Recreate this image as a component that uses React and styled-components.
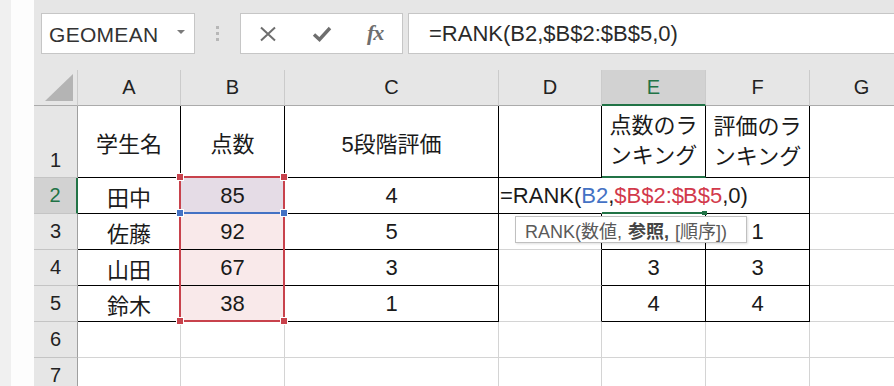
import React from "react";
import styled, { createGlobalStyle } from "styled-components";

const GREEN = "#217346";
const RED = "#c8424c";
const BLUE = "#4472c4";

const LINE = {
  black: "#000000",
  grid: "#d4d4d4",
  none: "transparent",
  green: GREEN,
};

const COLS = ["A", "B", "C", "D", "E", "F", "G"];

// E3 sits under the function tooltip, so it is left empty here
const ROWS = [
  ["学生名", "点数", "5段階評価", "", "点数のランキング", "評価のランキング", ""],
  ["田中", "85", "4", "edit", "", "", ""],
  ["佐藤", "92", "5", "", "", "1", ""],
  ["山田", "67", "3", "", "3", "3", ""],
  ["鈴木", "38", "1", "", "4", "4", ""],
  ["", "", "", "", "", "", ""],
  ["", "", "", "", "", "", ""],
];

// which border each cell draws on its right and bottom edge
function edges(r, c) {
  let right = "grid";
  let bottom = "grid";
  const table1 = r <= 5 && c <= 2;
  const table2 = r <= 5 && (c === 4 || c === 5);
  if (table1 || table2) {
    right = "black";
    bottom = "black";
  }
  if (r <= 5 && c === 3) right = "black";
  if (c === 3 && r <= 2) bottom = "black";
  if (r === 2 && (c === 3 || c === 4)) right = "none";
  if (c === 4 && r <= 2) bottom = "green";
  return { right, bottom };
}

function cellBg(r, c) {
  if (c !== 1 || r < 2 || r > 5) return "#ffffff";
  return r === 2 ? "#e5dce6" : "#f9e9ea";
}

export default function App() {
  return (
    <>
      <GlobalStyle />
      <Window>
        <SideStrip />
        <Sheet>
          <FormulaBar>
            <NameBox>
              GEOMEAN
              <DropArrow />
            </NameBox>
            <Grip>
              <Dot />
              <Dot />
              <Dot />
            </Grip>
            <FxBox>
              <FxSlot>
                <svg width="20" height="16" viewBox="0 0 20 16">
                  <path d="M3 1.5 L17 14.5 M17 1.5 L3 14.5" stroke="#6e6e6e" strokeWidth="2" fill="none" />
                </svg>
              </FxSlot>
              <FxSlot>
                <svg width="20" height="16" viewBox="0 0 20 16">
                  <path d="M2 8.5 L7.5 13.5 L18 2" stroke="#6e6e6e" strokeWidth="3.4" fill="none" />
                </svg>
              </FxSlot>
              <FxSlot>
                <FxText>fx</FxText>
              </FxSlot>
            </FxBox>
            <FormulaInput>=RANK(B2,$B$2:$B$5,0)</FormulaInput>
          </FormulaBar>

          <Grid>
            <Corner>
              <svg width="28" height="27" viewBox="0 0 28 27">
                <polygon points="0,27 28,0 28,27" fill="#b4b4b4" />
              </svg>
            </Corner>
            {COLS.map((l) => (
              <ColHead key={l} $active={l === "E"}>
                {l}
              </ColHead>
            ))}

            {ROWS.map((row, i) => {
              const r = i + 1;
              return (
                <React.Fragment key={r}>
                  <RowHead $active={r === 2} $bottom={r === 1}>
                    {r}
                  </RowHead>
                  {row.map((text, c) => {
                    const e = edges(r, c);
                    if (text === "edit") {
                      return (
                        <EditCell key={c} $r={e.right} $b={e.bottom}>
                          =RANK(<Ref $color={BLUE}>B2</Ref>,
                          <Ref $color="#d2394b">$B$2:$</Ref>
                          <Caret />
                          <Ref $color="#d2394b">B$5</Ref>,0)
                        </EditCell>
                      );
                    }
                    return (
                      <Cell
                        key={c}
                        $r={e.right}
                        $b={e.bottom}
                        $bg={cellBg(r, c)}
                        $wrap={r === 1 && (c === 4 || c === 5)}
                      >
                        {text}
                      </Cell>
                    );
                  })}
                </React.Fragment>
              );
            })}

            <RangeBox />
            <RefLine />
            <Handle $x={146} $y={107} $c={RED} />
            <Handle $x={250} $y={107} $c={RED} />
            <Handle $x={146} $y={251} $c={RED} />
            <Handle $x={250} $y={251} $c={RED} />
            <Handle $x={146} $y={143} $c={BLUE} />
            <Handle $x={250} $y={143} $c={BLUE} />
            <FillHandle />

            <Tip>
              <span>RANK(数値,</span>
              <b>参照,</b>
              <span>[順序])</span>
            </Tip>
          </Grid>
        </Sheet>
      </Window>
    </>
  );
}

const GlobalStyle = createGlobalStyle`
  html, body {
    margin: 0;
    padding: 0;
    background: #ffffff;
  }
  body {
    font-family: "Liberation Sans", "Noto Sans CJK JP", sans-serif;
    overflow: hidden;
  }
`;

const Window = styled.div`
  display: flex;
  width: 894px;
  height: 386px;
  overflow: hidden;
`;

const SideStrip = styled.div`
  width: 23px;
  flex-shrink: 0;
  border-left: 11px solid #f0f0f0;
  background: #fdfdfd;
`;

const Sheet = styled.div`
  flex: 1;
  min-width: 0;
  overflow: hidden;
  background: #e6e6e6;
`;

const FormulaBar = styled.div`
  display: flex;
  align-items: stretch;
  height: 41px;
  padding: 13px 0 16px 7px;
`;

const Box = styled.div`
  box-sizing: border-box;
  background: #ffffff;
  border: 1px solid #c6c6c6;
  display: flex;
  align-items: center;
`;

const NameBox = styled(Box)`
  width: 154px;
  flex-shrink: 0;
  padding: 2px 9px 0 7px;
  justify-content: space-between;
  font-size: 21px;
  color: #333333;
  letter-spacing: 0.3px;
`;

const DropArrow = styled.span`
  width: 0;
  height: 0;
  border-left: 4px solid transparent;
  border-right: 4px solid transparent;
  border-top: 4px solid #7a7a7a;
  margin-top: -6px;
`;

const Grip = styled.div`
  width: 45px;
  flex-shrink: 0;
  display: flex;
  flex-direction: column;
  align-items: center;
  justify-content: center;
  gap: 3px;
`;

const Dot = styled.span`
  width: 3px;
  height: 3px;
  background: #b7b7b7;
`;

const FxBox = styled(Box)`
  width: 163px;
  flex-shrink: 0;
`;

const FxSlot = styled.div`
  width: 54px;
  display: flex;
  justify-content: center;
  align-items: center;
`;

const FxText = styled.span`
  font-family: "Liberation Serif", "DejaVu Serif", serif;
  font-style: italic;
  font-weight: bold;
  font-size: 22px;
  color: #6e6e6e;
  letter-spacing: -1px;
  margin-top: -2px;
`;

const FormulaInput = styled(Box)`
  flex: 1;
  margin-left: 5px;
  border-right: none;
  padding-left: 20px;
  font-size: 22px;
  color: #2a2a2a;
  white-space: nowrap;
`;

const Grid = styled.div`
  position: relative;
  display: grid;
  grid-template-columns: 44px 103px 104px 214px 103px 104px 104px 104px;
  grid-template-rows: 36px 72px repeat(6, 36px);
`;

const Corner = styled.div`
  box-sizing: border-box;
  display: flex;
  align-items: flex-end;
  justify-content: flex-end;
  padding: 0 4px 4px 0;
  border-right: 1px solid #cbcbcb;
  border-bottom: 1px solid #ababab;
`;

const ColHead = styled.div`
  box-sizing: border-box;
  display: flex;
  align-items: center;
  justify-content: center;
  font-size: 20px;
  color: ${(p) => (p.$active ? GREEN : "#222222")};
  background: ${(p) => (p.$active ? "#d2d2d2" : "#e6e6e6")};
  border-right: 1px solid #cbcbcb;
  border-bottom: ${(p) => (p.$active ? `2px solid ${GREEN}` : "1px solid #ababab")};
`;

const RowHead = styled.div`
  box-sizing: border-box;
  display: flex;
  align-items: ${(p) => (p.$bottom ? "flex-end" : "center")};
  justify-content: center;
  padding-bottom: ${(p) => (p.$bottom ? "5px" : "0")};
  font-size: 20px;
  color: ${(p) => (p.$active ? GREEN : "#222222")};
  background: ${(p) => (p.$active ? "#d2d2d2" : "#e6e6e6")};
  border-right: ${(p) => (p.$active ? `2px solid ${GREEN}` : "1px solid #9f9f9f")};
  border-bottom: 1px solid #c4c4c4;
`;

const Cell = styled.div`
  box-sizing: border-box;
  display: flex;
  align-items: center;
  justify-content: center;
  text-align: center;
  font-size: 22px;
  line-height: ${(p) => (p.$wrap ? "30px" : "normal")};
  white-space: ${(p) => (p.$wrap ? "normal" : "nowrap")};
  color: #1a1a1a;
  background: ${(p) => p.$bg};
  border-right: 1px solid ${(p) => LINE[p.$r]};
  border-bottom: ${(p) => (p.$b === "green" ? "2px" : "1px")} solid ${(p) => LINE[p.$b]};
`;

const EditCell = styled(Cell)`
  position: relative;
  z-index: 2;
  justify-content: flex-start;
  background: #ffffff;
  padding-left: 1px;
  overflow: visible;
`;

const Ref = styled.span`
  color: ${(p) => p.$color};
`;

const Caret = styled.span`
  display: inline-block;
  width: 1px;
  height: 35px;
  margin-right: -1px;
  background: #a8a8a8;
  align-self: stretch;
`;

const RangeBox = styled.div`
  position: absolute;
  left: 145px;
  top: 106px;
  width: 106px;
  height: 146px;
  box-sizing: border-box;
  border: 2px solid ${RED};
  pointer-events: none;
`;

const RefLine = styled.div`
  position: absolute;
  left: 145px;
  top: 142px;
  width: 106px;
  height: 2px;
  background: ${BLUE};
`;

const Handle = styled.div`
  position: absolute;
  left: ${(p) => p.$x - 3}px;
  top: ${(p) => p.$y - 3}px;
  width: 6px;
  height: 6px;
  background: ${(p) => p.$c};
  outline: 1px solid #ffffff;
`;

const FillHandle = styled.div`
  position: absolute;
  z-index: 3;
  left: 668px;
  top: 141px;
  width: 5px;
  height: 4px;
  background: ${GREEN};
`;

const Tip = styled.div`
  position: absolute;
  z-index: 4;
  left: 481px;
  top: 146px;
  width: 232px;
  height: 27px;
  box-sizing: border-box;
  display: flex;
  align-items: center;
  gap: 6px;
  padding-left: 9px;
  font-size: 18px;
  color: #5a5a5a;
  white-space: nowrap;
  background: #ffffff;
  border: 1px solid #c0c0c0;
  box-shadow: 1px 1px 2px rgba(0, 0, 0, 0.12);

  b {
    color: #444444;
  }
`;
